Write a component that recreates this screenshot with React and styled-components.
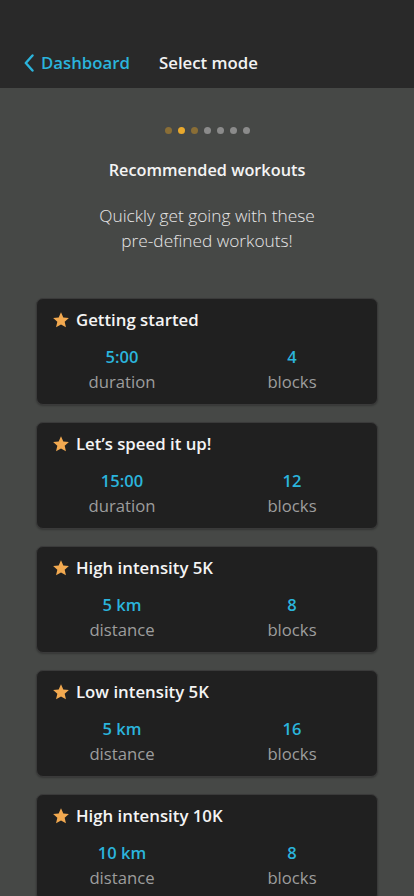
import React from "react";
import styled, { createGlobalStyle } from "styled-components";

const workouts = [
  { title: "Getting started", value: "5:00", unit: "duration", blocks: 4 },
  { title: "Let’s speed it up!", value: "15:00", unit: "duration", blocks: 12 },
  { title: "High intensity 5K", value: "5 km", unit: "distance", blocks: 8 },
  { title: "Low intensity 5K", value: "5 km", unit: "distance", blocks: 16 },
  { title: "High intensity 10K", value: "10 km", unit: "distance", blocks: 8 },
];

const dots = ["dim", "active", "dim", "off", "off", "off", "off"];

const Star = () => (
  <svg width="18" height="18" viewBox="0 0 24 24">
    <path
      fill="#f2a950"
      d="M12 1.8l3.1 6.9 7.4.7-5.6 5 1.7 7.4L12 17.9l-6.6 3.9 1.7-7.4-5.6-5 7.4-.7z"
    />
  </svg>
);

const App = () => {
  return (
    <Page>
      <GlobalStyle />
      <Header>
        <BackLink>
          <svg width="10" height="18" viewBox="0 0 10 18">
            <path d="M8.5 1.5L1.8 9l6.7 7.5" fill="none" stroke="#2bb4dc" strokeWidth="2.4" strokeLinecap="round" strokeLinejoin="round" />
          </svg>
          Dashboard
        </BackLink>
        <HeaderTitle>Select mode</HeaderTitle>
      </Header>
      <Content>
        <Dots>
          {dots.map((d, i) => (
            <Dot key={i} $state={d} />
          ))}
        </Dots>
        <Title>Recommended workouts</Title>
        <Subtitle>
          Quickly get going with these
          <br />
          pre-defined workouts!
        </Subtitle>
        <List>
          {workouts.map((w) => (
            <Card key={w.title}>
              <CardTitle>
                <Star />
                {w.title}
              </CardTitle>
              <Stats>
                <Stat>
                  <Value>{w.value}</Value>
                  <Label>{w.unit}</Label>
                </Stat>
                <Stat>
                  <Value>{w.blocks}</Value>
                  <Label>blocks</Label>
                </Stat>
              </Stats>
            </Card>
          ))}
        </List>
      </Content>
    </Page>
  );
};

const GlobalStyle = createGlobalStyle`
  html, body {
    margin: 0;
    padding: 0;
    background: #464846;
  }
  body {
    font-family: "Open Sans", Lato, sans-serif;
    -webkit-font-smoothing: antialiased;
  }
`;

const Page = styled.div`
  min-height: 896px;
  background: #464846;
  overflow: hidden;
`;

const Header = styled.div`
  height: 88px;
  box-sizing: border-box;
  background: #292929;
  display: flex;
  align-items: flex-end;
  padding: 0 0 14px 24px;
  gap: 29px;
`;

const BackLink = styled.div`
  display: flex;
  align-items: center;
  gap: 7px;
  color: #2bb4dc;
  font-size: 16.8px;
  font-weight: 600;
`;

const HeaderTitle = styled.div`
  color: #f2f2f2;
  font-size: 16.8px;
  font-weight: 600;
`;

const Content = styled.div`
  display: flex;
  flex-direction: column;
  align-items: center;
  padding-top: 39px;
`;

const Dots = styled.div`
  display: flex;
  gap: 6px;
`;

const Dot = styled.span`
  width: 7px;
  height: 7px;
  border-radius: 50%;
  background: ${(p) =>
    p.$state === "active" ? "#e9a92d" : p.$state === "dim" ? "#8a6e36" : "#8b8b8b"};
`;

const Title = styled.h2`
  margin: 25px 0 0;
  color: #f4f4f4;
  font-size: 16.3px;
  font-weight: 600;
  line-height: 22px;
`;

const Subtitle = styled.p`
  margin: 22px 0 0;
  color: #e6e6e6;
  font-size: 17.3px;
  font-weight: 300;
  line-height: 25px;
  text-align: center;
`;

const List = styled.div`
  margin-top: 45px;
  width: 342px;
  display: flex;
  flex-direction: column;
  gap: 17px;
`;

const Card = styled.div`
  height: 107px;
  box-sizing: border-box;
  background: #202020;
  border: 1px solid #3a3a3a;
  border-radius: 7px;
  box-shadow: 0 1px 2px rgba(0, 0, 0, 0.25);
  padding-top: 11px;
`;

const CardTitle = styled.div`
  display: flex;
  align-items: center;
  gap: 6px;
  padding-left: 15px;
  color: #f4f4f4;
  font-size: 16.8px;
  font-weight: 600;
  line-height: 20px;
`;

const Stats = styled.div`
  display: grid;
  grid-template-columns: 1fr 1fr;
  margin-top: 18px;
`;

const Stat = styled.div`
  display: flex;
  flex-direction: column;
  align-items: center;
`;

const Value = styled.div`
  color: #2bb4dc;
  font-size: 16.5px;
  font-weight: 600;
  line-height: 18px;
`;

const Label = styled.div`
  margin-top: 7px;
  color: #9d9d9d;
  font-size: 16.7px;
  font-weight: 400;
  line-height: 18px;
`;

export default App;
